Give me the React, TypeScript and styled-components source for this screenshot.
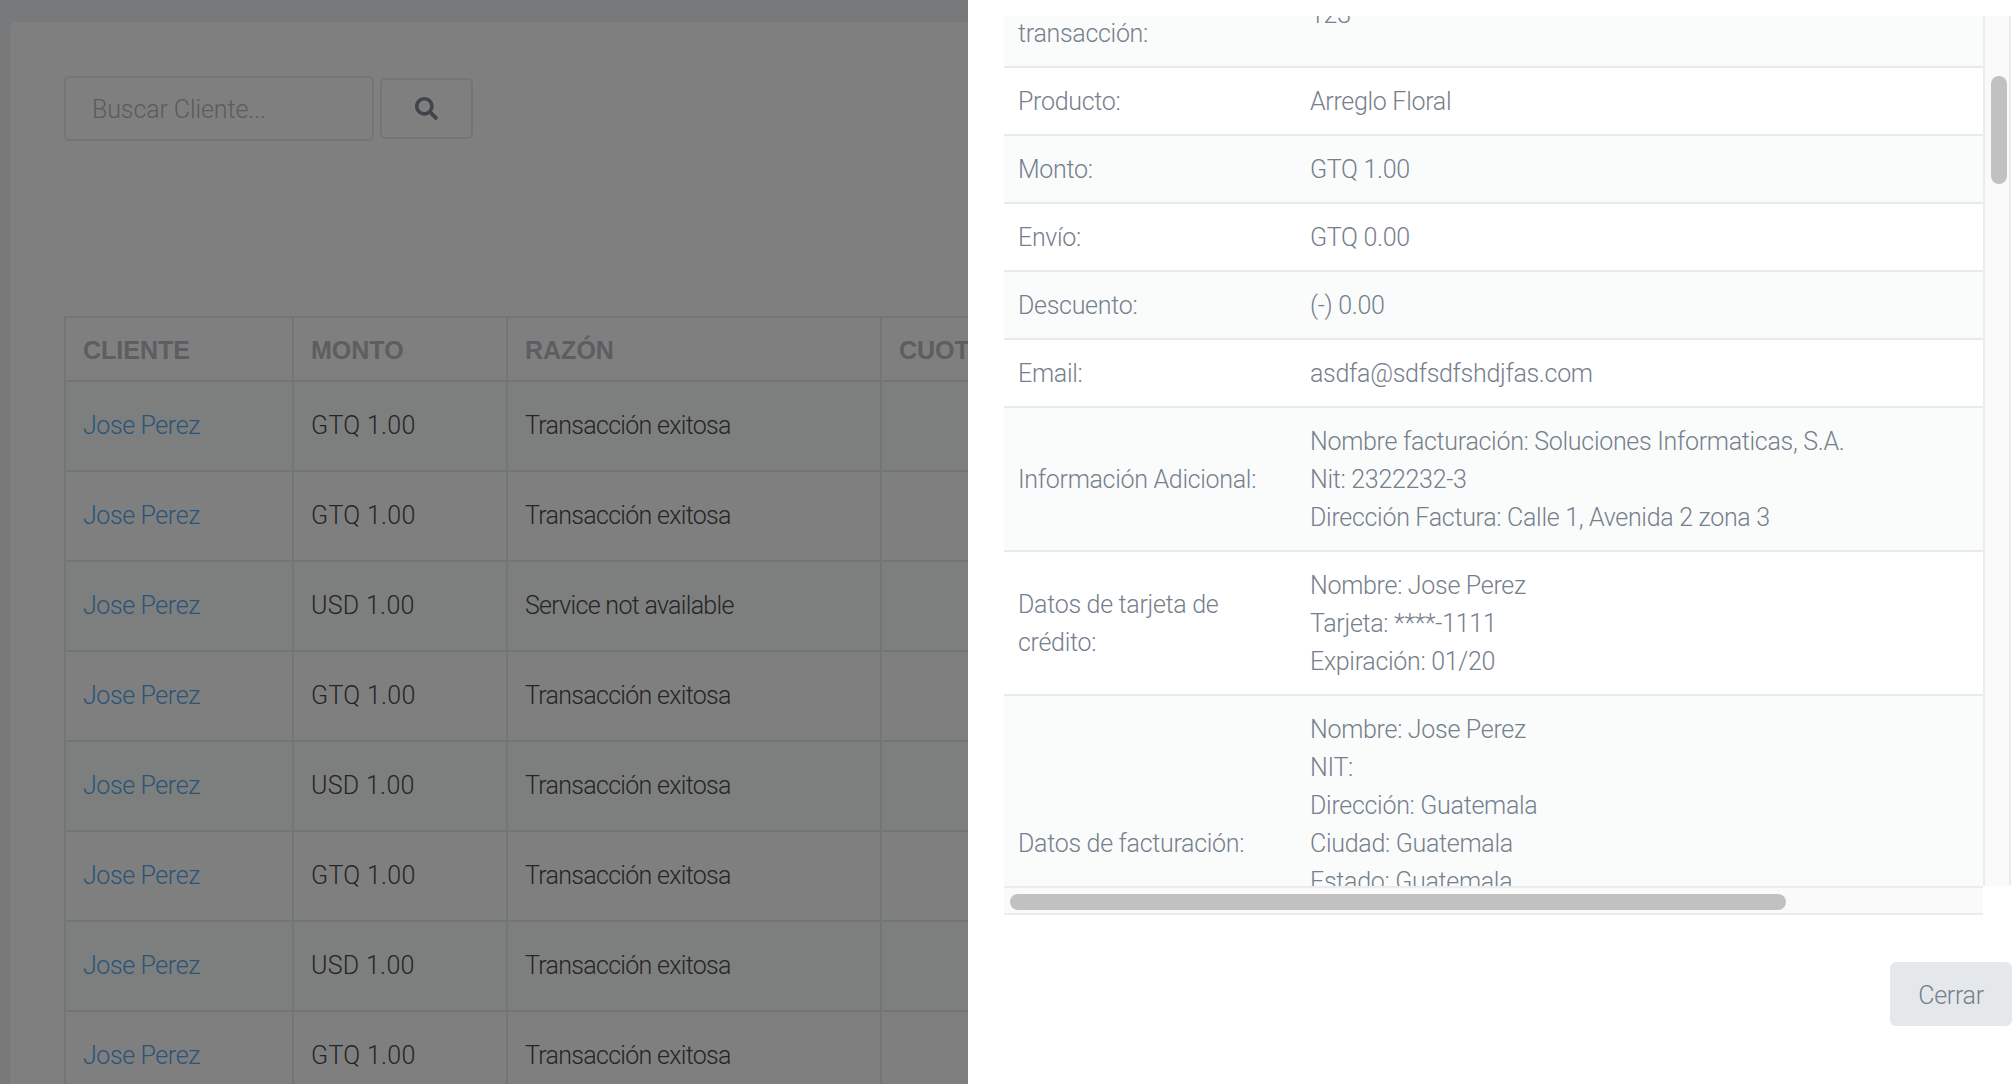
import React from 'react'
import styled, { createGlobalStyle } from 'styled-components'
import { FaSearch } from 'react-icons/fa'

const GlobalStyle = createGlobalStyle`
  html, body {
    margin: 0;
    height: 100%;
    overflow: hidden;
    background: #eff2f5;
    font-family: Roboto, "Liberation Sans", sans-serif;
    font-weight: 300;
  }
`

const Page = styled.div`
  height: 1084px;
  padding: 22px 0 0 10px;
  box-sizing: border-box;
  overflow: hidden;
`

const Card = styled.div`
  background: #fff;
  border-radius: 6px;
  height: 1200px;
  padding: 54px 0 0 54px;
`

const SearchRow = styled.form`
  display: flex;
  align-items: center;
  gap: 6px;
  margin-bottom: 175px;
`

const SearchInput = styled.input`
  width: 310px;
  height: 65px;
  box-sizing: border-box;
  border: 2px solid #e4ecec;
  border-radius: 5px;
  padding: 2px 26px 0;
  background: #fff;
  font: inherit;
  font-size: 25px;
  letter-spacing: -0.1px;

  &::placeholder {
    color: #b4b8bc;
    opacity: 1;
  }
`

const SearchButton = styled.button`
  width: 93px;
  height: 61px;
  box-sizing: border-box;
  border: 2px solid #e4ecec;
  border-radius: 5px;
  background: #fff;
  display: flex;
  align-items: center;
  justify-content: center;
  color: #7e8a96;
  font-size: 23px;
  padding: 0;
`

const Clients = styled.table`
  border-collapse: collapse;
  table-layout: fixed;
  width: 1400px;
`

const Head = styled.th<{ $w: number }>`
  width: ${(p) => p.$w}px;
  height: 64px;
  box-sizing: border-box;
  border: 2px solid #e6ecec;
  padding: 2px 17px 0;
  text-align: left;
  font-family: "Liberation Sans", sans-serif;
  font-size: 25px;
  font-weight: 700;
  color: #b8bcc2;
`

const ClientRow = styled.tr`
  height: 90px;

  &:nth-child(odd) {
    background: #fafefd;
  }
`

const Cell = styled.td`
  border: 2px solid #e6ecec;
  padding: 0 17px 2px;
  font-size: 25px;
  letter-spacing: -0.4px;
  color: #4a4a4a;
  white-space: nowrap;
`

const AmountCell = styled(Cell)`
  letter-spacing: 0.3px;
`

const ReasonCell = styled(Cell)`
  letter-spacing: -0.7px;
`

const ClientLink = styled.a`
  color: #56a8ee;
`

const Backdrop = styled.div`
  position: fixed;
  inset: 0;
  background: rgba(0, 0, 0, 0.5);
`

const Panel = styled.aside`
  position: fixed;
  top: 0;
  right: 0;
  bottom: 0;
  width: 1046px;
  background: #fff;
  padding: 16px 0 0 36px;
  box-sizing: border-box;
  display: flex;
  flex-direction: column;
`

const ScrollArea = styled.div`
  position: relative;
  width: 1007px;
  height: 899px;
  flex: none;
`

const Viewport = styled.div`
  width: 979px;
  height: 870px;
  overflow: hidden;
`

const DetailTable = styled.table`
  border-collapse: collapse;
  table-layout: fixed;
  width: 979px;
  margin-top: -54px;
`

const DetailRow = styled.tr`
  &:nth-child(odd) {
    background: #fafcfc;
  }
`

const DetailCell = styled.td`
  border-bottom: 2px solid #e6ebef;
  padding: 15px 14px 13px;
  font-size: 25px;
  line-height: 38px;
  letter-spacing: -0.3px;
  color: #75808c;
  vertical-align: middle;
`

const LabelCell = styled(DetailCell)`
  width: 292px;
  box-sizing: border-box;
  padding-right: 30px;
`

const VTrack = styled.div`
  position: absolute;
  top: 0;
  left: 979px;
  width: 28px;
  height: 870px;
  background: #fafafa;
  border-left: 2px solid #ececec;
  border-right: 2px solid #ececec;
  box-sizing: border-box;
`

const VThumb = styled.div`
  position: absolute;
  top: 60px;
  left: 6px;
  width: 16px;
  height: 108px;
  border-radius: 8px;
  background: #c1c1c1;
`

const HTrack = styled.div`
  position: absolute;
  left: 0;
  top: 870px;
  width: 979px;
  height: 29px;
  background: #fafafa;
  border-top: 2px solid #ececec;
  border-bottom: 2px solid #ececec;
  box-sizing: border-box;
`

const HThumb = styled.div`
  position: absolute;
  left: 6px;
  top: 6px;
  width: 776px;
  height: 16px;
  border-radius: 8px;
  background: #c1c1c1;
`

const Footer = styled.div`
  display: flex;
  justify-content: flex-end;
  padding: 47px 2px 0 0;
`

const CloseButton = styled.button`
  width: 122px;
  height: 64px;
  border: 0;
  border-radius: 6px;
  background: #e4e8eb;
  color: #75808c;
  font: inherit;
  font-size: 25px;
  letter-spacing: -0.3px;
  padding: 2px 0 0;
`

const clients = [
  ['GTQ 1.00', 'Transacción exitosa'],
  ['GTQ 1.00', 'Transacción exitosa'],
  ['USD 1.00', 'Service not available'],
  ['GTQ 1.00', 'Transacción exitosa'],
  ['USD 1.00', 'Transacción exitosa'],
  ['GTQ 1.00', 'Transacción exitosa'],
  ['USD 1.00', 'Transacción exitosa'],
  ['GTQ 1.00', 'Transacción exitosa'],
]

const details: [string, string[]][] = [
  ['Número de transacción:', ['123']],
  ['Producto:', ['Arreglo Floral']],
  ['Monto:', ['GTQ 1.00']],
  ['Envío:', ['GTQ 0.00']],
  ['Descuento:', ['(-) 0.00']],
  ['Email:', ['asdfa@sdfsdfshdjfas.com']],
  ['Información Adicional:', ['Nombre facturación: Soluciones Informaticas, S.A.', 'Nit: 2322232-3', 'Dirección Factura: Calle 1, Avenida 2 zona 3']],
  ['Datos de tarjeta de crédito:', ['Nombre: Jose Perez', 'Tarjeta: ****-1111', 'Expiración: 01/20']],
  ['Datos de facturación:', ['Nombre: Jose Perez', 'NIT:', 'Dirección: Guatemala', 'Ciudad: Guatemala', 'Estado: Guatemala', 'País: Guatemala', 'Código postal: 01001']],
]

const App = () => {
  return (
    <>
      <GlobalStyle />
      <Page>
        <Card>
          <SearchRow onSubmit={(e) => e.preventDefault()}>
            <SearchInput placeholder="Buscar Cliente..." />
            <SearchButton type="submit" aria-label="Buscar"><FaSearch /></SearchButton>
          </SearchRow>
          <Clients>
            <thead>
              <tr>
                <Head $w={228}>CLIENTE</Head>
                <Head $w={214}>MONTO</Head>
                <Head $w={374}>RAZÓN</Head>
                <Head $w={584}>CUOTAS</Head>
              </tr>
            </thead>
            <tbody>
              {clients.map(([amount, reason], i) => (
                <ClientRow key={i}>
                  <Cell><ClientLink>Jose Perez</ClientLink></Cell>
                  <AmountCell>{amount}</AmountCell>
                  <ReasonCell>{reason}</ReasonCell>
                  <Cell />
                </ClientRow>
              ))}
            </tbody>
          </Clients>
        </Card>
      </Page>
      <Backdrop />
      <Panel>
        <ScrollArea>
          <Viewport>
            <DetailTable>
              <tbody>
                {details.map(([label, lines]) => (
                  <DetailRow key={label}>
                    <LabelCell>{label}</LabelCell>
                    <DetailCell>
                      {lines.map((line) => <div key={line}>{line}</div>)}
                    </DetailCell>
                  </DetailRow>
                ))}
              </tbody>
            </DetailTable>
          </Viewport>
          <VTrack><VThumb /></VTrack>
          <HTrack><HThumb /></HTrack>
        </ScrollArea>
        <Footer>
          <CloseButton>Cerrar</CloseButton>
        </Footer>
      </Panel>
    </>
  )
}

export default App
